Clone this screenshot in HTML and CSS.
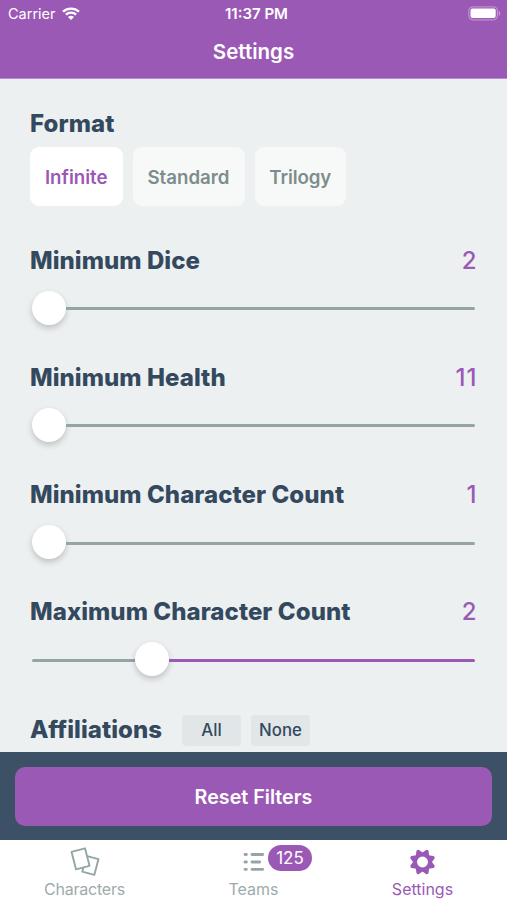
FILE: index.html
```html
<!DOCTYPE html>
<html lang="en">
<head>
<meta charset="utf-8">
<title>Settings</title>
<link rel="stylesheet" href="styles.css">
</head>
<body>
<header class="header">
  <div class="status">
    <div class="status-left"><span class="carrier">Carrier</span>
      <svg class="wifi" width="18" height="13" viewBox="0 0 18 13" fill="none" stroke="#fff" stroke-width="2.3"><path d="M1 4.700C5.500.5 12.500.5 17 4.700M3.900 7.700c2.900-2.700 7.300-2.700 10.200 0"/><path d="M6 9.900c1.700-1.600 4.300-1.600 6 0l-3 3z" fill="#fff" stroke="none"/></svg>
    </div>
    <span class="time">11:37 PM</span>
    <div class="status-right">
      <svg width="33" height="15" viewBox="0 0 33 15"><rect x=".8" y=".8" width="28.600" height="13" rx="4" fill="none" stroke="#c08fd0" stroke-width="1.200"/><rect x="2.500" y="2.500" width="25.200" height="9.600" rx="2" fill="#fff"/><path d="M30.700 5c2 .7 2 4 0 4.800z" fill="#c79bd6"/></svg>
    </div>
  </div>
  <h1 class="page-title">Settings</h1>
</header>
<main class="content">
  <section class="format">
    <h2 class="title">Format</h2>
    <div class="segments">
      <button class="segment active">Infinite</button>
      <button class="segment standard">Standard</button>
      <button class="segment trilogy">Trilogy</button>
    </div>
  </section>
  <section class="setting">
    <div class="row"><h2 class="title">Minimum Dice</h2><span class="value">2</span></div>
    <div class="slider"><span class="thumb"></span><span class="track"></span></div>
  </section>
  <section class="setting">
    <div class="row"><h2 class="title">Minimum Health</h2><span class="value eleven">11</span></div>
    <div class="slider"><span class="thumb"></span><span class="track"></span></div>
  </section>
  <section class="setting">
    <div class="row"><h2 class="title">Minimum Character Count</h2><span class="value">1</span></div>
    <div class="slider"><span class="thumb"></span><span class="track"></span></div>
  </section>
  <section class="setting">
    <div class="row"><h2 class="title">Maximum Character Count</h2><span class="value">2</span></div>
    <div class="slider"><span class="track before"></span><span class="thumb"></span><span class="track purple"></span></div>
  </section>
  <section class="affiliations">
    <h2 class="title">Affiliations</h2>
    <button class="chip">All</button>
    <button class="chip">None</button>
  </section>
</main>
<div class="actions"><button class="reset">Reset Filters</button></div>
<nav class="tabs">
  <a class="tab">
    <svg class="icon" width="32" height="32" viewBox="0 0 32 32" fill="none" stroke="#95a5a6" stroke-width="1.900" stroke-linejoin="round"><path d="M2.500 5.800 16 2.300l4.500 17.500L7 23.300z"/><path d="m18.200 10.200 11.300 2.900-4.200 15.800-12-3.200 1-3.800"/></svg>
    <span class="label characters">Characters</span>
  </a>
  <a class="tab">
    <svg class="icon" width="32" height="32" viewBox="0 0 32 32" stroke="#95a5a6" stroke-width="2.800" stroke-linecap="round"><path d="M7 8.500h1.400M7 16h1.400M7 23.300h1.400M14 8.500h10.700M14 16h7.700M14 23.300h10.700"/></svg>
    <span class="label">Teams</span>
    <span class="badge">125</span>
  </a>
  <a class="tab current">
    <svg class="icon" width="32" height="32" viewBox="0 0 32 32">
      <defs><path id="tooth" d="M7.500-3.300 12-.6v1.200L7.500 3.300z"/></defs>
      <g transform="translate(15.500 16) rotate(22.500)" fill="#9b59b6">
        <g stroke="#9b59b6" stroke-width="1.800" stroke-linejoin="round">
          <use href="#tooth"/><use href="#tooth" transform="rotate(45)"/><use href="#tooth" transform="rotate(90)"/><use href="#tooth" transform="rotate(135)"/><use href="#tooth" transform="rotate(180)"/><use href="#tooth" transform="rotate(225)"/><use href="#tooth" transform="rotate(270)"/><use href="#tooth" transform="rotate(315)"/>
        </g>
        <circle r="9.200"/><circle r="5.500" fill="#fff"/>
      </g>
    </svg>
    <span class="label">Settings</span>
  </a>
</nav>
</body>
</html>
```
FILE: styles.css
```css
* { box-sizing: border-box; }
body {
  margin: 0;
  width: 507px;
  height: 900px;
  overflow: hidden;
  display: flex;
  flex-direction: column;
  background: #ecf0f1;
  color: #34495e;
  font-family: Inter, "Liberation Sans", sans-serif;
}
button { border: 0; padding: 0; font-family: inherit; white-space: nowrap; }
h1, h2 { margin: 0; }
.header { height: 79px; flex: none; background: #9b59b6; color: #fff; border-bottom: 1px solid #b98bcb; }
.status { display: grid; grid-template-columns: 1fr auto 1fr; align-items: center; height: 27px; padding: 0 6px 0 8px; font-size: 14.500px; }
.status-left { display: flex; align-items: center; gap: 6px; }
.status-right { display: flex; justify-content: flex-end; }
.time { padding-left: 4px; font-size: 15px; font-weight: 600; }
.page-title { margin-top: 10px; line-height: 30px; font-size: 20.500px; font-weight: 600; text-align: center; }
.content { flex: 1; min-height: 0; overflow: hidden; padding: 30px 30.500px 0 30px; }
.title { font-size: 24px; line-height: 30px; font-weight: 800; letter-spacing: .06px; white-space: nowrap; }
.segments { display: flex; gap: 10px; margin-top: 8px; }
.segment { width: 92.500px; height: 59px; padding-top: 1px; border-radius: 9px; background: #f6f9f8; color: #7f8c8d; font-size: 18.700px; font-weight: 600; }
.segment.active { background: #fff; color: #9b59b6; }
.segment.standard { width: 112px; }
.segment.trilogy { width: 91.500px; letter-spacing: -.1px; }
.format { margin-bottom: 39.500px; }
.setting { height: 117.300px; }
.row { display: flex; justify-content: space-between; }
.value { color: #9b59b6; font-size: 24px; line-height: 30px; font-weight: 500; }
.eleven { letter-spacing: 1px; margin-right: -1px; }
.slider { display: flex; align-items: center; height: 34px; margin-top: 15px; padding: 0 1.500px 0 2px; }
.thumb { width: 34px; height: 34px; flex: none; border-radius: 50%; background: #fff; box-shadow: 0 3px 6px rgba(0, 0, 0, .2); }
.track { flex: 1; height: 3px; margin-top: 2px; background: #95a5a6; border-radius: 0 2px 2px 0; }
.track.before { flex: 0 0 103px; border-radius: 2px 0 0 2px; }
.track.purple { background: #9b59b6; }
.affiliations { display: flex; align-items: center; gap: 10px; }
.affiliations .title { width: 142px; }
.chip { width: 59px; height: 31px; border-radius: 4px; background: #e1e6e8; color: #34495e; font-size: 16.800px; font-weight: 500; }
.actions { flex: none; height: 88px; padding: 15px 15px 14px; background: #3d5166; }
.reset { display: block; width: 100%; height: 59px; border-radius: 10px; background: #9b59b6; color: #fff; font-size: 19.700px; font-weight: 600; }
.tabs { flex: none; height: 60px; display: grid; grid-template-columns: repeat(3, 1fr); background: #fff; }
.tab { position: relative; display: flex; flex-direction: column; align-items: center; padding-top: 6px; color: #9dabac; }
.icon { display: block; }
.label { margin-top: 1px; line-height: 20px; font-size: 16px; }
.characters { letter-spacing: -.2px; }
.tab.current { color: #9b59b6; }
.badge { position: absolute; left: 99px; top: 5px; width: 44px; height: 26px; border-radius: 13px; background: #9b59b6; color: #fff; font-size: 17px; line-height: 26px; text-align: center; }
```
